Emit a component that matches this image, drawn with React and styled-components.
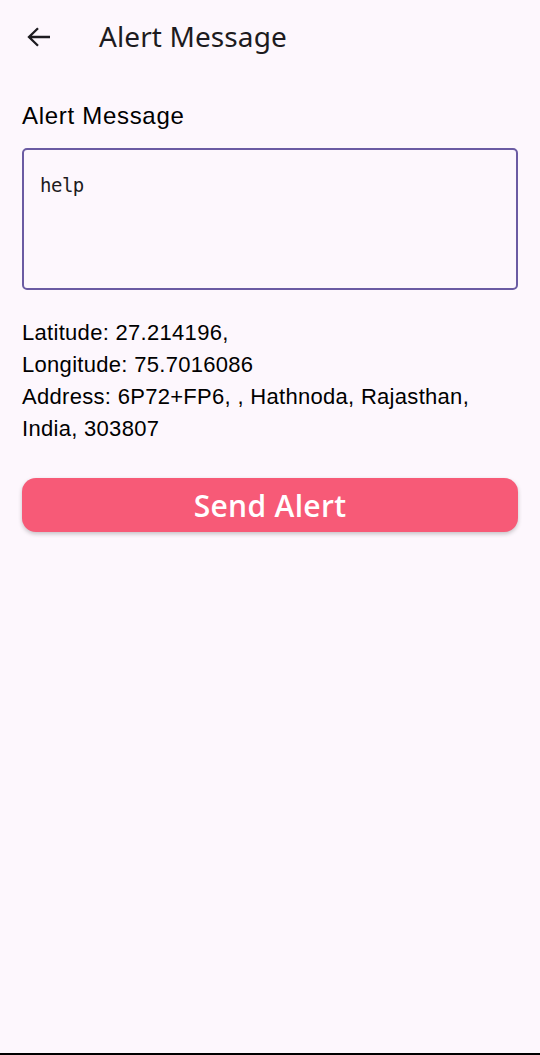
import React from "react";
import styled, { createGlobalStyle } from "styled-components";

function App() {
  return (
    <>
      <GlobalStyle />
      <Screen>
        <TopBar>
          <BackButton aria-label="Back">
            <svg width="24" height="20" viewBox="0 0 24 20">
              <path
                d="M23 10H2M11 1.2L2 10l9 8.8"
                fill="none"
                stroke="#1d1b20"
                strokeWidth="2.3"
              />
            </svg>
          </BackButton>
          <Title>Alert Message</Title>
        </TopBar>

        <Content>
          <Label>Alert Message</Label>
          <MessageBox defaultValue="help" />

          <Info>
            Latitude: 27.214196,
            <br />
            Longitude: 75.7016086
            <br />
            Address: 6P72+FP6, , Hathnoda, Rajasthan, India, 303807
          </Info>

          <SendButton>Send Alert</SendButton>
        </Content>
      </Screen>
    </>
  );
}

const GlobalStyle = createGlobalStyle`
  html, body {
    margin: 0;
    padding: 0;
    background: #fdf7fd;
  }
  * {
    box-sizing: border-box;
  }
`;

const Screen = styled.div`
  height: 1055px;
  display: flex;
  flex-direction: column;
  background: #fdf7fd;
  border-bottom: 2px solid #000;
`;

const TopBar = styled.div`
  height: 74px;
  display: flex;
  align-items: center;
  padding: 0 0 0 27px;
  gap: 48px;
`;

const BackButton = styled.div`
  width: 24px;
  height: 20px;
  display: flex;
`;

const Title = styled.h1`
  margin: 0 0 2px;
  font-family: "Noto Sans", "Open Sans", sans-serif;
  font-weight: 400;
  font-size: 28px;
  color: #1d1b20;
  letter-spacing: 0.1px;
`;

const Content = styled.div`
  padding: 28px 22px 0;
  display: flex;
  flex-direction: column;
`;

const Label = styled.div`
  font-family: "Liberation Sans", Arial, sans-serif;
  font-size: 24px;
  letter-spacing: 0.7px;
  color: #000;
  line-height: 28px;
`;

const MessageBox = styled.textarea`
  margin-top: 18px;
  height: 142px;
  width: 100%;
  resize: none;
  border: 2px solid #6b5ba3;
  border-radius: 5px;
  background: #fdf7fd;
  padding: 24px 16px 20px;
  font-family: "DejaVu Sans Mono", monospace;
  font-size: 19px;
  letter-spacing: -0.5px;
  color: #1d1b20;
  outline: none;
`;

const Info = styled.p`
  margin: 27px 0 0;
  font-family: "Liberation Sans", Arial, sans-serif;
  font-size: 22px;
  letter-spacing: 0.3px;
  line-height: 32px;
  color: #000;
  padding-right: 30px;
`;

const SendButton = styled.button`
  margin-top: 33px;
  height: 54px;
  width: 100%;
  border: none;
  border-radius: 14px;
  background: #f75a77;
  color: #fff;
  font-family: "Open Sans", "Noto Sans", sans-serif;
  font-weight: 600;
  font-size: 30px;
  letter-spacing: 0.3px;
  box-shadow: 0 2px 4px rgba(0, 0, 0, 0.22);
`;

export default App;
